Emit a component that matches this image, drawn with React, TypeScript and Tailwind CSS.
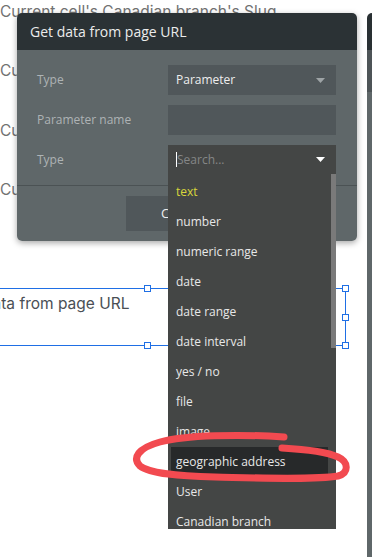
import React from 'react';

const items = [
  'text',
  'number',
  'numeric range',
  'date',
  'date range',
  'date interval',
  'yes / no',
  'file',
  'image',
  'geographic address',
  'User',
  'Canadian branch',
];

function Caret({ color }: { color: string }) {
  return (
    <svg width="9" height="5" viewBox="0 0 9 5">
      <path d="M0 0 L9 0 L4.5 5 Z" fill={color} />
    </svg>
  );
}

function Handle({ className }: { className: string }) {
  return <span className={`absolute w-[7px] h-[7px] bg-white border-[1.5px] border-[#1f6fe5] ${className}`} />;
}

export default function App() {
  return (
    <div className="relative w-[372px] h-[557px] overflow-hidden bg-white font-['Open_Sans',sans-serif]">
      {/* page behind the popup */}
      <div className="flex flex-col font-['Inter',sans-serif] text-[15.5px] text-[#727272]">
        <div className="h-[24px] leading-[24px] whitespace-nowrap">Current cell's Canadian branch's Slug</div>
        <div className="mt-[35px] h-[24px] leading-[24px] whitespace-nowrap">Current cell's Canadian branch's Name</div>
        <div className="mt-[36px] h-[24px] leading-[24px] whitespace-nowrap">Current cell's Canadian branch's City</div>
        <div className="mt-[35px] h-[24px] leading-[24px] whitespace-nowrap">Current cell's Canadian branch's Logo</div>

        {/* selected element */}
        <div className="relative mt-[86px] ml-[-51px] w-[397px] h-[58px] border border-[#1f6fe5]">
          <div className="pl-[3px] pt-[3px] h-[24px] leading-[24px] whitespace-nowrap text-[#4a4f55]">Get data from page URL</div>
          <Handle className="left-[194px] top-[-4px]" />
          <Handle className="right-[-4px] top-[-4px]" />
          <Handle className="right-[-4px] top-[25px]" />
          <Handle className="left-[194px] bottom-[-4px]" />
          <Handle className="right-[-4px] bottom-[-4px]" />
        </div>
      </div>

      {/* second panel peeking at right edge */}
      <div className="absolute right-0 top-[13px] bottom-0 w-[5px] flex flex-col rounded-tl-[5px] overflow-hidden">
        <div className="h-[37px] bg-[#293033]" />
        <div className="h-[42px] bg-[#4d5457]" />
        <div className="flex-1 bg-[#5f6769]" />
      </div>

      {/* popup */}
      <div className="absolute left-[17px] top-[13px] w-[340px] rounded-[5px] shadow-[0_2px_6px_rgba(0,0,0,0.35)]">
        <div className="h-[37px] rounded-t-[5px] bg-[#2b3235] px-[13px] flex items-center text-[14px] text-[#ececec]">
          Get data from page URL
        </div>
        <div className="bg-[#5f6769] rounded-b-[5px]">
          <div className="px-[20px] pt-[15px] pb-[10px] flex flex-col gap-[10px] text-[12px]">
            <div className="flex items-center h-[30px]">
              <div className="w-[131px] text-[#aeb3b5]">Type</div>
              <div className="w-[168px] h-[30px] bg-[#50575a] flex items-center justify-between pl-[8px] pr-[11px] text-[#eeeeee]">
                Parameter
                <Caret color="#9ea4a6" />
              </div>
            </div>
            <div className="flex items-center h-[30px]">
              <div className="w-[131px] text-[#aeb3b5]">Parameter name</div>
              <div className="w-[168px] h-[30px] bg-[#50575a]" />
            </div>
            <div className="flex items-center h-[30px]">
              <div className="w-[131px] text-[#aeb3b5]">Type</div>
              <div className="relative w-[168px] h-[30px]">
                {/* open dropdown */}
                <div className="absolute left-0 top-0 z-10 w-[168px] h-[384px] bg-[#444645] flex flex-col">
                  <div className="h-[29px] shrink-0 flex items-center pl-[8px] pr-[11px]">
                    <span className="w-px h-[15px] bg-white" />
                    <span className="flex-1 text-[#858787]">Search...</span>
                    <Caret color="#ffffff" />
                  </div>
                  <div className="flex flex-1 min-h-0">
                    <div className="flex-1 px-[3px] pt-[3px] overflow-hidden">
                      {items.map((it) => (
                        <div
                          key={it}
                          className={`h-[30px] shrink-0 flex items-center pl-[5px] whitespace-nowrap ${
                            it === 'text' ? 'text-[#d9d63c]' : 'text-[#e8e8e8]'
                          } ${it === 'geographic address' ? 'bg-[#27292a]' : ''}`}
                        >
                          {it}
                        </div>
                      ))}
                    </div>
                    <div className="w-[5px]">
                      <div className="h-[174px] bg-[#7a7a7a]" />
                    </div>
                  </div>
                </div>
              </div>
            </div>
          </div>
          <div className="border-t border-[#4b5254] pt-[10px] pb-[10px] pl-[109px]">
            <div className="w-[110px] h-[35px] bg-[#50575a] flex items-center justify-center text-[13px] text-[#eeeeee]">
              Cancel
            </div>
          </div>
        </div>
      </div>

      {/* red annotation */}
      <svg className="absolute left-0 top-0 z-20 pointer-events-none" width="372" height="557" viewBox="0 0 372 557">
        <path
          d="M284 437 C240 434 185 435 160 442 C138 448 132 458 140 466 C150 474 180 476 215 477 C260 478 315 480 338 476 C349 473 349 462 338 457 C325 451 300 449 282 448"
          fill="none"
          stroke="#f24a50"
          strokeWidth="7"
          strokeLinecap="round"
          strokeLinejoin="round"
        />
      </svg>
    </div>
  );
}
